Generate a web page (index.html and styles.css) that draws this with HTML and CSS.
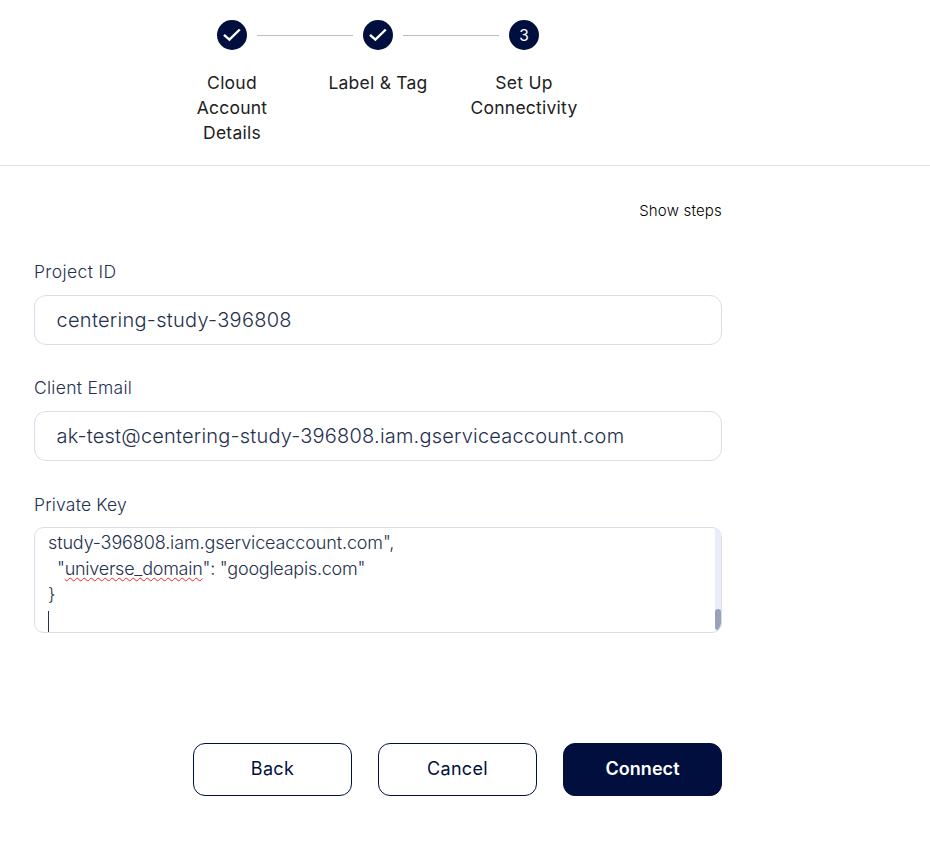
FILE: index.html
```html
<!DOCTYPE html>
<html lang="en">
<head>
<meta charset="utf-8">
<title>Set Up Connectivity</title>
<link rel="stylesheet" href="styles.css">
</head>
<body>
<header class="header">
  <ol class="stepper">
    <li class="step">
      <div class="marker"><svg class="check" viewBox="0 0 30 30"><path d="M7 14.8L12.4 19.7L22.8 9.5"/></svg></div>
      <span class="step-label">Cloud Account Details</span>
    </li>
    <li class="step">
      <div class="marker"><svg class="check" viewBox="0 0 30 30"><path d="M7 14.8L12.4 19.7L22.8 9.5"/></svg></div>
      <span class="step-label">Label &amp; Tag</span>
    </li>
    <li class="step">
      <div class="marker"><span class="number">3</span></div>
      <span class="step-label">Set Up Connectivity</span>
    </li>
  </ol>
</header>
<main class="form">
  <a class="show-steps">Show steps</a>
  <div class="field">
    <label class="label label-id">Project ID</label>
    <div class="input input-id">centering-study-396808</div>
  </div>
  <div class="field">
    <label class="label">Client Email</label>
    <div class="input">ak-test@centering-study-396808.iam.gserviceaccount.com</div>
  </div>
  <div class="field field-key">
    <label class="label">Private Key</label>
    <div class="textarea">
      <div class="code">
        <div class="line account">study-396808.iam.gserviceaccount.com",</div>
        <div class="line indent">"<span class="misspelled">universe_domain</span>": "googleapis.com"</div>
        <div class="line">}</div>
        <div class="caret"></div>
      </div>
      <div class="scrollbar"><div class="thumb"></div></div>
    </div>
  </div>
  <div class="actions">
    <button class="button">Back</button>
    <button class="button">Cancel</button>
    <button class="button primary">Connect</button>
  </div>
</main>
</body>
</html>
```
FILE: styles.css
```css
* { box-sizing: border-box; }
body { margin: 0; background: #fff; font-family: Inter, sans-serif; color: #212121; }
.header { height: 166px; padding: 20px 0 0 159px; border-bottom: 1px solid #e0e0e0; }
.stepper { display: flex; width: 438px; margin: 0; padding: 0; list-style: none; }
.step { position: relative; display: flex; flex-direction: column; align-items: center; width: 146px; padding: 0 10px; }
.step + .step::before { content: ""; position: absolute; top: 15px; left: -48px; width: 96px; height: 1px; background: #bdbdbd; }
.marker { display: flex; align-items: center; justify-content: center; width: 30px; height: 30px; border-radius: 50%; background: #000f3d; color: #fff; font-size: 15.5px; line-height: 30px; }
.number { padding-top: 1px; }
.check { width: 30px; height: 30px; fill: none; stroke: #fff; stroke-width: 2.4; }
.step-label { width: 110px; margin-top: 20px; font-size: 17.5px; line-height: 25px; letter-spacing: .24px; text-align: center; }
.step:first-child .step-label { width: 90px; }
.form { display: flex; flex-direction: column; width: 688px; margin-left: 34px; padding-top: 32px; }
.show-steps { align-self: flex-end; height: 26px; font-size: 15px; line-height: 26px; letter-spacing: .19px; color: #000; font-weight: 300; }
.field { margin-top: 35px; color: #25304e; }
.field + .field { margin-top: 30px; }
.field.field-key { margin-top: 31px; }
.label { display: block; height: 25px; margin-bottom: 11px; font-size: 17.5px; line-height: 25px; font-weight: 300; letter-spacing: .27px; }
.label-id { letter-spacing: .38px; }
.field-key .label { margin-bottom: 10px; letter-spacing: .18px; }
.input { display: flex; align-items: center; height: 50px; padding: 0 21.5px; border: 1px solid #d9ddea; border-radius: 12px; font-size: 20px; font-weight: 300; letter-spacing: .2px; }
.input-id { letter-spacing: .28px; }
.textarea { display: flex; justify-content: space-between; height: 106px; border: 1px solid #d9ddea; border-radius: 10px; overflow: hidden; }
.code { padding: 2px 0 0 13px; font-size: 18px; font-weight: 300; letter-spacing: -.25px; }
.line { height: 26px; line-height: 26px; }
.account { letter-spacing: -.13px; }
.indent { padding-left: 9px; }
.misspelled { text-decoration: underline wavy #f22 1.3px; text-underline-offset: 2px; text-decoration-skip-ink: none; }
.caret { width: 1px; height: 22px; margin-top: 3px; background: #25304e; }
.scrollbar { display: flex; flex-direction: column; justify-content: flex-end; width: 6px; padding-bottom: 2px; background: #e8edf7; }
.thumb { height: 21px; border-radius: 3px; background: #98a2b9; }
.actions { display: flex; justify-content: flex-end; gap: 26px; margin-top: 110px; }
.button { width: 159px; height: 53px; padding: 0 0 2px; border: 1px solid #000f3d; border-radius: 12px; background: #fff; color: #000f3d; font: 400 18px/25px Inter, sans-serif; letter-spacing: .35px; }
.primary { background: #000f3d; color: #fff; font-weight: 600; letter-spacing: .06px; }
```
